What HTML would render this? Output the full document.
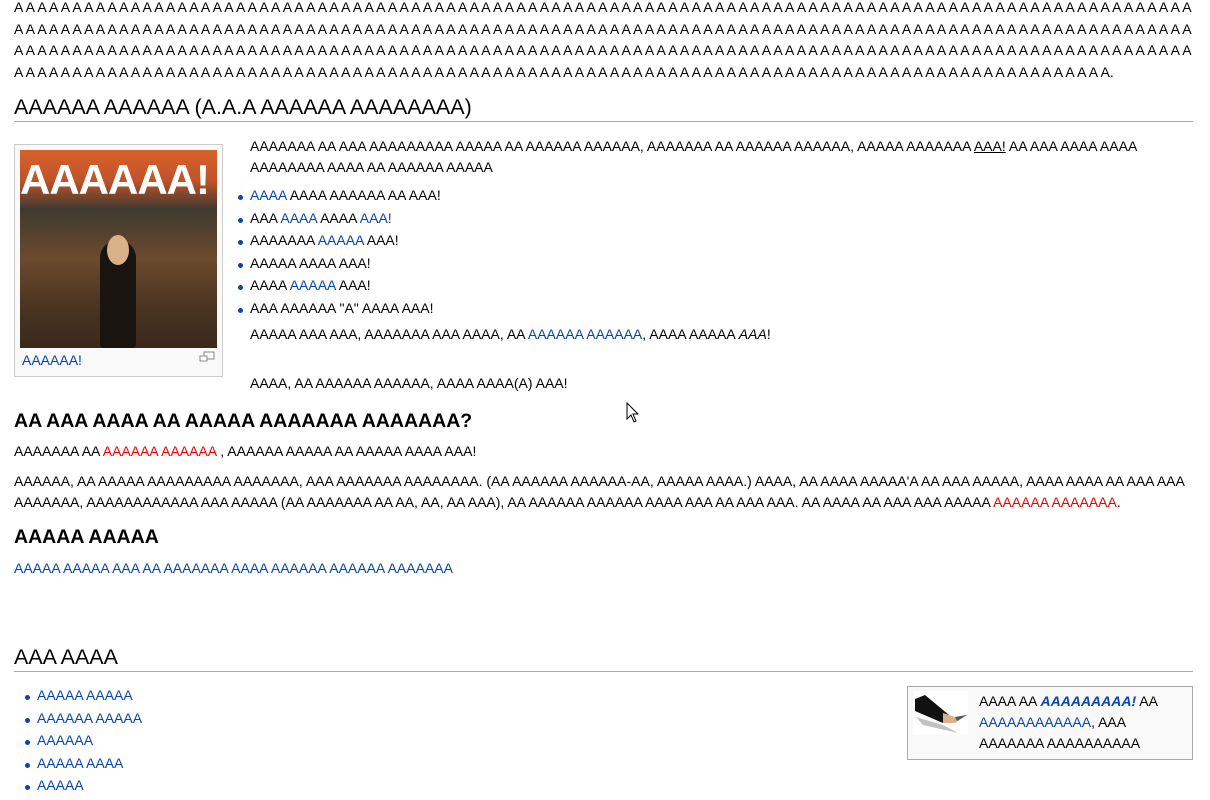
<!DOCTYPE html>
<html><head><meta charset="utf-8"><style>
body{margin:0;background:#fff;font-family:"Liberation Sans",sans-serif;font-size:14px;color:#000;width:1210px;height:800px;overflow:hidden;position:relative}
.a{position:absolute;white-space:nowrap}
a,.l{color:#0645ad;text-decoration:none}
.r{color:#e00}
h2{position:absolute;margin:0;font-weight:normal;font-size:21.5px;left:14px;right:17px;border-bottom:1px solid #aaa;padding-bottom:1px}
h3{position:absolute;margin:0;font-size:19.5px;font-weight:bold;left:14px}
ul{position:absolute;margin:0;padding:0;list-style:none}
ul li{height:22.5px;line-height:22.5px;position:relative;padding-left:12px}
ul li:before{content:"";position:absolute;left:0;top:11px;width:5px;height:5px;border-radius:50%;background:#0645ad}
</style></head><body>
<div class="a" style="left:14px;top:-3px;line-height:21.5px">
A A A A A A A A A A A A A A A A A A A A A A A A A A A A A A A A A A A A A A A A A A A A A A A A A A A A A A A A A A A A A A A A A A A A A A A A A A A A A A A A A A A A A A A A A A A A A A A A A A A A A<br>
A A A A A A A A A A A A A A A A A A A A A A A A A A A A A A A A A A A A A A A A A A A A A A A A A A A A A A A A A A A A A A A A A A A A A A A A A A A A A A A A A A A A A A A A A A A A A A A A A A A A A<br>
A A A A A A A A A A A A A A A A A A A A A A A A A A A A A A A A A A A A A A A A A A A A A A A A A A A A A A A A A A A A A A A A A A A A A A A A A A A A A A A A A A A A A A A A A A A A A A A A A A A A A<br>
A A A A A A A A A A A A A A A A A A A A A A A A A A A A A A A A A A A A A A A A A A A A A A A A A A A A A A A A A A A A A A A A A A A A A A A A A A A A A A A A A A A A A A A A A A A A A A.</div>
<h2 style="top:95px">AAAAAA AAAAAA (A.A.A AAAAAA AAAAAAAA)</h2>
<div class="a" style="left:14px;top:144px;width:207px;height:231px;border:1px solid #ccc;background:#f9f9f9"></div>
<div class="a" style="left:20px;top:150px;width:197px;height:198px;background:linear-gradient(180deg,#d8602a 0%,#c2542a 15%,#3f3a30 30%,#6c4a2e 55%,#4a3320 80%,#3a2a1c 100%)"></div>
<div class="a" style="left:20px;top:156px;width:197px;font:bold 42px 'Liberation Sans',sans-serif;color:#fff;letter-spacing:-1px">AAAAAA!</div>
<div class="a" style="left:100px;top:240px;width:36px;height:108px;background:#1a1410;border-radius:18px 18px 4px 4px"></div>
<div class="a" style="left:107px;top:235px;width:22px;height:30px;background:#d9b28a;border-radius:50%"></div>
<div class="a" style="left:22px;top:352px" ><a>AAAAAA!</a></div>
<svg class="a" style="left:199px;top:351px" width="17" height="12"><rect x="5" y="1" width="10" height="7" fill="none" stroke="#888"/><rect x="1" y="5" width="7" height="5" fill="#fff" stroke="#888"/></svg>
<div class="a" style="left:250px;top:136px;line-height:21px">AAAAAAA AA AAA AAAAAAAAA AAAAA AA AAAAAA AAAAAA, AAAAAAA AA AAAAAA AAAAAA, AAAAA AAAAAAA <u>AAA!</u> AA AAA AAAA AAAA<br>AAAAAAAA AAAA AA AAAAAA AAAAA</div>
<ul style="left:238px;top:184px">
<li><a>AAAA</a> AAAA AAAAAA AA AAA!</li>
<li>AAA <a>AAAA</a> AAAA <a>AAA!</a></li>
<li>AAAAAAA <a>AAAAA</a> AAA!</li>
<li>AAAAA AAAA AAA!</li>
<li>AAAA <a>AAAAA</a> AAA!</li>
<li>AAA AAAAAA "A" AAAA AAA!</li>
</ul>
<div class="a" style="left:250px;top:326px">AAAAA AAA AAA, AAAAAAA AAA AAAA, AA <a>AAAAAA AAAAAA</a>, AAAA AAAAA <i>AAA</i>!</div>
<div class="a" style="left:250px;top:375px">AAAA, AA AAAAAA AAAAAA, AAAA AAAA(A) AAA!</div>
<h3 style="top:410px">AA AAA AAAA AA AAAAA AAAAAAA AAAAAAA?</h3>
<div class="a" style="left:14px;top:443px">AAAAAAA AA <span class="r">AAAAAA AAAAAA</span> , AAAAAA AAAAA AA AAAAA AAAA AAA!</div>
<div class="a" style="left:14px;top:471px;line-height:21px">AAAAAA, AA AAAAA AAAAAAAAA AAAAAAA, AAA AAAAAAA AAAAAAAA. (AA AAAAAA AAAAAA-AA, AAAAA AAAA.) AAAA, AA AAAA AAAAA'A AA AAA AAAAA, AAAA AAAA AA AAA AAA<br>AAAAAAA, AAAAAAAAAAAA AAA AAAAA (AA AAAAAAA AA AA, AA, AA AAA), AA AAAAAA AAAAAA AAAA AAA AA AAA AAA. AA AAAA AA AAA AAA AAAAA <span class="r">AAAAAA AAAAAAA</span>.</div>
<h3 style="top:526px">AAAAA AAAAA</h3>
<div class="a" style="left:14px;top:560px"><a>AAAAA AAAAA AAA AA AAAAAAA AAAA AAAAAA AAAAAA AAAAAAA</a></div>
<h2 style="top:645px">AAA AAAA</h2>
<ul style="left:25px;top:684px">
<li><a>AAAAA AAAAA</a></li>
<li><a>AAAAAA AAAAA</a></li>
<li><a>AAAAAA</a></li>
<li><a>AAAAA AAAA</a></li>
<li><a>AAAAA</a></li>
</ul>
<div class="a" style="left:907px;top:686px;width:284px;height:72px;border:1px solid #aaa;background:#f9f9f9"></div>
<div class="a" style="left:913px;top:691px;width:55px;height:44px;background:#fff"></div>
<svg class="a" style="left:913px;top:691px" width="55" height="44"><polygon points="2,8 12,4 36,24 30,32 2,20" fill="#111"/><polygon points="30,22 36,24 42,26 54,24 42,32 30,32" fill="#d9b28a"/><polygon points="42,26 54,24 44,30" fill="#555"/><polygon points="3,26 30,34 45,42 10,34" fill="#999" opacity=".6"/></svg>
<div class="a" style="left:979px;top:691px;line-height:21px">AAAA AA <i><b class="l">AAAAAAAAA!</b></i> AA<br><a>AAAAAAAAAAAA</a>, AAA<br>AAAAAAA AAAAAAAAAA</div>
<svg class="a" style="left:626px;top:402px" width="14" height="22"><path d="M1 1 L1 17 L5 13 L8 20 L10 19 L7 12 L12 12 Z" fill="#fff" stroke="#000" stroke-width="1"/></svg>
</body></html>
